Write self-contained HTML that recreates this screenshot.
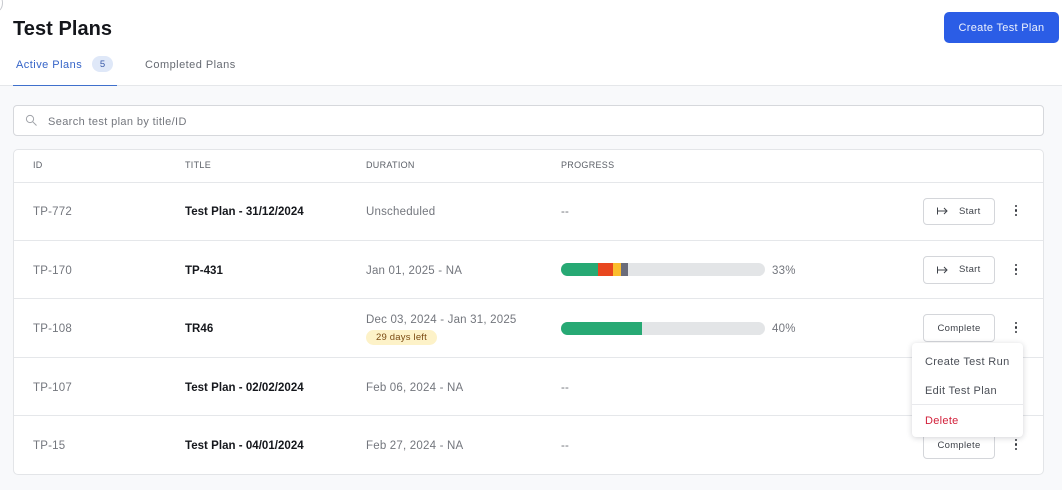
<!DOCTYPE html>
<html><head><meta charset="utf-8">
<style>
html,body{margin:0;padding:0}
body{width:1062px;height:490px;position:relative;overflow:hidden;background:#f8f9fb;font-family:"Liberation Sans",sans-serif;color:#4b4f57}
.a{position:absolute;white-space:nowrap}
.t{font-size:11.5px;line-height:14px;letter-spacing:.2px}
.g{color:#73767d}
.b{color:#15171c;font-weight:bold;letter-spacing:.03px}
.h{font-size:9px;line-height:12px;color:#5c6068;letter-spacing:.3px;top:159px}
.line{position:absolute;left:14px;width:1029px;height:1px;background:#e5e7ea}
.btn{position:absolute;left:923px;width:70px;height:25px;border:1px solid #d4d6da;border-radius:4px;background:#fff;font-size:9.5px;line-height:25px;color:#3f434a;letter-spacing:.3px}
.dots{position:absolute;left:1015px;width:3px}
.dots i{display:block;width:2.3px;height:2.3px;border-radius:50%;background:#33363c;margin-bottom:2.2px}
.bar{position:absolute;left:561px;width:204px;height:13px;border-radius:7px;background:#e3e5e7;overflow:hidden}
.bar i{position:absolute;top:0;height:13px}
</style></head><body>
<div class="a" style="left:0;top:0;width:1062px;height:85px;background:#fff;border-bottom:1px solid #e5e7ea"></div>
<div class="a" style="left:-7px;top:-5px;width:8px;height:14px;border:1px solid #c9cbd0;border-radius:50%;background:#fff"></div>
<div class="a" style="left:13px;top:17px;font-size:20px;line-height:24px;font-weight:bold;color:#14161b;letter-spacing:.05px">Test Plans</div>
<div class="a" style="left:16px;top:58px;font-size:11px;line-height:14px;color:#3564c8;letter-spacing:.47px">Active Plans</div>
<div class="a" style="left:92px;top:56px;width:21px;height:16px;border-radius:8px;background:#dfe8f8;color:#3a5aa8;font-size:9.5px;line-height:17px;text-align:center">5</div>
<div class="a" style="left:13px;top:85px;width:104px;height:1px;background:#3f70cc"></div>
<div class="a" style="left:145px;top:58px;font-size:11px;line-height:14px;color:#666a72;letter-spacing:.46px">Completed Plans</div>
<div class="a" style="left:944px;top:12px;width:115px;height:31px;border-radius:5px;background:#2b5de6;color:#eef2fd;font-size:11px;line-height:33px;text-align:center;letter-spacing:.3px">Create Test Plan</div>

<div class="a" style="left:13px;top:105px;width:1029px;height:29px;border:1px solid #d6d8dc;border-radius:4px;background:#fff"></div>
<svg class="a" style="left:25px;top:114px" width="13" height="13" viewBox="0 0 13 13" fill="none" stroke="#a0a3a9" stroke-width="1"><circle cx="5" cy="5" r="3.6"/><path d="M7.8 7.8L11.5 11.5"/></svg>
<div class="a" style="left:48px;top:115px;font-size:11px;line-height:14px;color:#74777e;letter-spacing:.37px">Search test plan by title/ID</div>

<div class="a" style="left:13px;top:149px;width:1029px;height:324px;border:1px solid #e3e5e8;border-radius:5px;background:#fff"></div>
<div class="a h" style="left:33px">ID</div>
<div class="a h" style="left:185px">TITLE</div>
<div class="a h" style="left:366px">DURATION</div>
<div class="a h" style="left:561px">PROGRESS</div>
<div class="line" style="top:182px"></div>
<div class="line" style="top:240px"></div>
<div class="line" style="top:298px"></div>
<div class="line" style="top:357px"></div>
<div class="line" style="top:415px"></div>

<div class="a t g" style="left:33px;top:205px">TP-772</div>
<div class="a t b" style="left:185px;top:205px">Test Plan - 31/12/2024</div>
<div class="a t g" style="left:366px;top:205px">Unscheduled</div>
<div class="a t g" style="left:561px;top:205px">--</div>

<div class="a t g" style="left:33px;top:264px">TP-170</div>
<div class="a t b" style="left:185px;top:264px">TP-431</div>
<div class="a t g" style="left:366px;top:264px">Jan 01, 2025 - NA</div>
<div class="bar" style="top:263px"><i style="left:0;width:37px;background:#27a974"></i><i style="left:37px;width:15px;background:#e8471f"></i><i style="left:52px;width:8px;background:#fbbd2d"></i><i style="left:60px;width:7px;background:#6a6c7a"></i></div>
<div class="a t g" style="left:772px;top:264px">33%</div>

<div class="a t g" style="left:33px;top:322px">TP-108</div>
<div class="a t b" style="left:185px;top:322px">TR46</div>
<div class="a t g" style="left:366px;top:313px">Dec 03, 2024 - Jan 31, 2025</div>
<div class="a" style="left:366px;top:330px;width:71px;height:15px;border-radius:8px;background:#fdf2c8;color:#7a4a12;font-size:9.5px;line-height:15px;text-align:center;letter-spacing:.2px">29 days left</div>
<div class="bar" style="top:322px"><i style="left:0;width:81px;background:#27a974"></i></div>
<div class="a t g" style="left:772px;top:322px">40%</div>

<div class="a t g" style="left:33px;top:381px">TP-107</div>
<div class="a t b" style="left:185px;top:381px">Test Plan - 02/02/2024</div>
<div class="a t g" style="left:366px;top:381px">Feb 06, 2024 - NA</div>
<div class="a t g" style="left:561px;top:381px">--</div>

<div class="a t g" style="left:33px;top:439px">TP-15</div>
<div class="a t b" style="left:185px;top:439px">Test Plan - 04/01/2024</div>
<div class="a t g" style="left:366px;top:439px">Feb 27, 2024 - NA</div>
<div class="a t g" style="left:561px;top:439px">--</div>

<div class="btn" style="top:198px"><svg class="a" style="left:12px;top:7px" width="13" height="10" viewBox="0 0 13 10" fill="none" stroke="#3f434a" stroke-width="1"><path d="M1.5 1.5V8.5M1.5 5H11M8 2L11 5L8 8"/></svg><span class="a" style="left:35px;top:0">Start</span></div>
<div class="btn" style="top:256px;height:26px"><svg class="a" style="left:12px;top:8px" width="13" height="10" viewBox="0 0 13 10" fill="none" stroke="#3f434a" stroke-width="1"><path d="M1.5 1.5V8.5M1.5 5H11M8 2L11 5L8 8"/></svg><span class="a" style="left:35px;top:0">Start</span></div>
<div class="btn" style="top:314px;height:26px;line-height:27px;text-align:center">Complete</div>
<div class="btn" style="top:431px;height:26px;line-height:27px;text-align:center">Complete</div>
<div class="dots" style="top:205px"><i></i><i></i><i></i></div>
<div class="dots" style="top:264px"><i></i><i></i><i></i></div>
<div class="dots" style="top:322px"><i></i><i></i><i></i></div>
<div class="dots" style="top:439px"><i></i><i></i><i></i></div>

<div class="a" style="left:912px;top:343px;width:111px;height:94px;background:#fff;border-radius:4px;box-shadow:0 1px 6px rgba(30,35,50,.2)"></div>
<div class="a" style="left:925px;top:355px;font-size:11px;line-height:14px;color:#4b4f57;letter-spacing:.35px">Create Test Run</div>
<div class="a" style="left:925px;top:384px;font-size:11px;line-height:14px;color:#4b4f57;letter-spacing:.35px">Edit Test Plan</div>
<div class="a" style="left:912px;top:404px;width:111px;height:1px;background:#e8e9ec"></div>
<div class="a" style="left:925px;top:414px;font-size:11px;line-height:14px;color:#d2203a;letter-spacing:.3px">Delete</div>
</body></html>
